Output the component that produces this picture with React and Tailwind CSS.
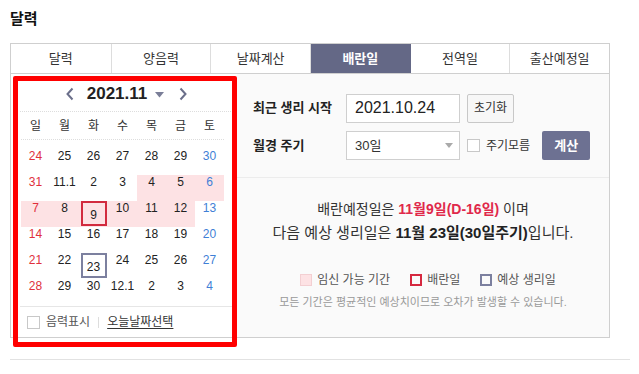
import React from 'react';

const FONT = { fontFamily: '"Liberation Sans", "Noto Sans CJK KR", sans-serif' };

const tabs = ['달력', '양음력', '날짜계산', '배란일', '전역일', '출산예정일'];
const weekdays = ['일', '월', '화', '수', '목', '금', '토'];

const weeks = [
    ['24', '25', '26', '27', '28', '29', '30'],
    ['31', '11.1', '2', '3', '4', '5', '6'],
    ['7', '8', '9', '10', '11', '12', '13'],
    ['14', '15', '16', '17', '18', '19', '20'],
    ['21', '22', '23', '24', '25', '26', '27'],
    ['28', '29', '30', '12.1', '2', '3', '4'],
];

// fertile window cells (row-col)
const pink = ['1-4', '1-5', '1-6', '2-0', '2-1', '2-2', '2-3', '2-4', '2-5'];

const Day = ({ value, row, col }) => {
    const key = `${row}-${col}`;
    const color = col === 0 ? 'text-[#e0303c]' : col === 6 ? 'text-[#3f7fd6]' : 'text-[#222]';
    const bg = pink.includes(key) ? 'bg-[#fde2e4]' : '';
    const boxed = key === '2-2' ? 'border-[#d22a3e]' : key === '4-2' ? 'border-[#7c809f]' : null;

    return (
        <div className={`h-[26px] flex justify-center ${bg}`}>
            {boxed ? (
                <div className={`w-[26px] h-[25px] border-2 ${boxed} flex items-center justify-center pt-[2px] text-[12px] leading-[14px] ${color}`}>
                    {value}
                </div>
            ) : (
                <span className={`text-[12px] leading-[14px] ${color}`}>{value}</span>
            )}
        </div>
    );
};

const App = () => {
    return (
        <div className="w-[639px] h-[374px] bg-white relative overflow-hidden px-[10px] pt-[9px] text-[#333]" style={FONT}>
            <h2 className="text-[15px] font-bold leading-[20px] text-[#111]">달력</h2>

            {/* tabs */}
            <div className="mt-[14px] w-[600px] grid grid-cols-6 border border-[#cfcfcf] h-[31px]">
                {tabs.map((t, i) => (
                    <div
                        key={t}
                        className={`flex items-center justify-center text-[13px] ${
                            i === 3
                                ? 'bg-[#646886] text-white font-bold'
                                : 'text-[#333] bg-white'
                        } ${i > 0 && i !== 4 ? 'border-l border-[#ddd]' : ''} ${i === 4 ? 'border-l border-[#646886]' : ''}`}
                    >
                        {t}
                    </div>
                ))}
            </div>

            {/* main panel */}
            <div className="w-[600px] h-[264px] flex border border-t-0 border-[#cfcfcf]">
                {/* calendar */}
                <div className="w-[226px] bg-white pl-[9px] pr-[4px] flex flex-col">
                    <div className="h-[38px] pt-[3px] flex items-center justify-center border-b border-dotted border-[#ddd]">
                        <svg width="10" height="14" viewBox="0 0 10 14" className="mr-[12px]">
                            <path d="M7.5 1.5 L2.5 7 L7.5 12.5" fill="none" stroke="#6b6f8a" strokeWidth="2" />
                        </svg>
                        <span className="text-[17px] font-bold text-[#222] leading-[20px]">2021.11</span>
                        <svg width="9" height="6" viewBox="0 0 9 6" className="ml-[8px] mt-[2px]">
                            <path d="M0 0 H9 L4.5 5.5 Z" fill="#7a7e98" />
                        </svg>
                        <svg width="10" height="14" viewBox="0 0 10 14" className="ml-[14px]">
                            <path d="M2.5 1.5 L7.5 7 L2.5 12.5" fill="none" stroke="#6b6f8a" strokeWidth="2" />
                        </svg>
                    </div>

                    <div className="h-[28px] ml-[1px] w-[203px] grid grid-cols-7 items-center border-b border-dotted border-[#ddd]">
                        {weekdays.map((w) => (
                            <span key={w} className="text-center text-[12px] text-[#333]">{w}</span>
                        ))}
                    </div>

                    <div className="pt-[9px] ml-[1px] w-[203px] grid grid-cols-7">
                        {weeks.map((week, r) =>
                            week.map((d, c) => <Day key={`${r}-${c}`} value={d} row={r} col={c} />)
                        )}
                    </div>

                    <div className="mt-auto h-[31px] border-t border-[#e6e6e6] flex items-center pl-[7px]">
                        <span className="w-[13px] h-[13px] border border-[#c8c8c8] bg-white" />
                        <span className="ml-[6px] text-[12px] text-[#555]">음력표시</span>
                        <span className="mx-[8px] w-px h-[11px] bg-[#ddd]" />
                        <span className="text-[12px] text-[#333] underline underline-offset-2">오늘날짜선택</span>
                    </div>
                </div>

                {/* right side */}
                <div className="flex-1 bg-[#fafafa] flex flex-col">
                    <div className="pt-[20px] pb-[17px] pl-[16px] border-b border-[#ececec] flex flex-col gap-[9px]">
                        <div className="flex items-center h-[28px]">
                            <span className="w-[93px] text-[13px] font-bold text-[#222]">최근 생리 시작</span>
                            <div className="w-[114px] h-[29px] border border-[#cfcfcf] bg-white flex items-center pl-[8px] text-[16px] text-[#222]">
                                2021.10.24
                            </div>
                            <button type="button" className="ml-[7px] w-[47px] h-[29px] border border-[#c8c8c8] rounded-[2px] bg-[#f7f7f7] text-[12px] text-[#333]">
                                초기화
                            </button>
                        </div>
                        <div className="flex items-center h-[29px]">
                            <span className="w-[93px] text-[13px] font-bold text-[#222]">월경 주기</span>
                            <div className="w-[114px] h-[29px] border border-[#cfcfcf] bg-white flex items-center justify-between pl-[8px] pr-[6px] text-[13px] text-[#333]">
                                30일
                                <svg width="8" height="5" viewBox="0 0 8 5">
                                    <path d="M0 0 H8 L4 5 Z" fill="#aaa" />
                                </svg>
                            </div>
                            <span className="ml-[7px] w-[13px] h-[13px] border border-[#c8c8c8] bg-white" />
                            <span className="ml-[6px] text-[12px] text-[#333]">주기모름</span>
                            <button type="button" className="ml-[12px] w-[48px] h-[29px] rounded-[2px] bg-[#6d7192] text-white text-[13px] font-bold">
                                계산
                            </button>
                        </div>
                    </div>

                    <div className="pt-[19px] flex flex-col items-center">
                        <p className="text-[14px] leading-[24px] text-[#333]">
                            배란예정일은 <b className="text-[#e0284a]">11월9일(D-16일)</b> 이며
                        </p>
                        <p className="text-[15px] leading-[24px] text-[#333]">
                            다음 예상 생리일은 <b className="text-[#222] font-bold">11월 23일(30일주기)</b>입니다.
                        </p>

                        <div className="mt-[27px] ml-[10px] flex items-center gap-[5px] text-[12px] leading-[16px] text-[#555]">
                            <span className="w-[12px] h-[12px] bg-[#fde2e4] border border-[#f3cfd2]" />
                            <span className="mr-[15px]">임신 가능 기간</span>
                            <span className="w-[12px] h-[12px] border-2 border-[#d6283f]" />
                            <span className="mr-[15px]">배란일</span>
                            <span className="w-[12px] h-[12px] border-2 border-[#7c809f]" />
                            <span>예상 생리일</span>
                        </div>
                        <p className="mt-[6px] text-[11px] leading-[16px] text-[#999]">
                            모든 기간은 평균적인 예상치이므로 오차가 발생할 수 있습니다.
                        </p>
                    </div>
                </div>
            </div>

            <div className="mt-[21px] w-[620px] border-t border-[#e2e2e2]" />

            {/* annotation box */}
            <div className="absolute left-[13px] top-[76px] w-[224px] h-[271px] border-[5px] border-[#ff0000] rounded-[2px] pointer-events-none" />
        </div>
    );
};

export default App;
